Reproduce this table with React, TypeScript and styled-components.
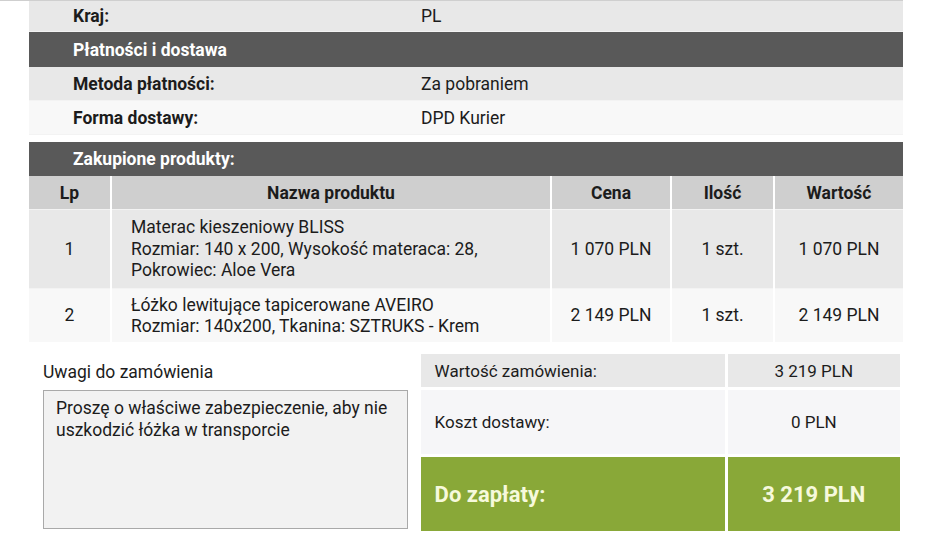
import React from 'react'
import styled, { createGlobalStyle } from 'styled-components'

const GlobalStyle = createGlobalStyle`
    body {
        margin: 0;
        background: #ffffff;
        font-family: Roboto, "Liberation Sans", Arial, sans-serif;
        color: #1c1c1c;
    }
`;

const Page = styled.div`
    width: 874px;
    padding-left: 29px;
    border-top: 1px solid #cfcfcf;
`;

const InfoTable = styled.table`
    width: 100%;
    border-collapse: collapse;
    font-size: 17.5px;
`;

const InfoRow = styled.tr<{ $light?: boolean }>`
    background: ${({ $light }) => ($light ? '#f8f8f8' : '#e8e8e8')};
    border-bottom: 1px solid #f3f3f3;
`;

const InfoLabel = styled.td<{ $h: number }>`
    width: 348px;
    height: ${({ $h }) => $h}px;
    padding: 0 0 0 44px;
    font-weight: 700;
`;

const InfoValue = styled.td`
    padding: 0;
`;

const SectionHeader = styled.td<{ $h: number }>`
    height: ${({ $h }) => $h}px;
    padding: 0 0 0 44px;
    background: #595959;
    color: #ffffff;
    font-weight: 700;
    font-size: 17.5px;
`;

const ProductTable = styled.table`
    width: 100%;
    margin-top: 7px;
    border-collapse: collapse;
    font-size: 17.5px;
`;

const HeadCell = styled.th<{ $w?: number }>`
    width: ${({ $w }) => ($w ? `${$w}px` : 'auto')};
    height: 33px;
    padding: 0;
    background: #cfcfcf;
    font-weight: 700;
    text-align: center;
    border-left: 2px solid #ffffff;
    &:first-child {
        border-left: none;
    }
`;

const ProductRow = styled.tr<{ $light?: boolean }>`
    background: ${({ $light }) => ($light ? '#f8f8f8' : '#e8e8e8')};
    border-top: 1px solid #f3f3f3;
`;

const Cell = styled.td<{ $left?: boolean; $h: number }>`
    height: ${({ $h }) => $h}px;
    padding: ${({ $left }) => ($left ? '1px 0 0 19px' : '1px 0 0')};
    text-align: ${({ $left }) => ($left ? 'left' : 'center')};
    line-height: 21.5px;
    border-left: 2px solid #ffffff;
    &:first-child {
        border-left: none;
    }
`;

const Bottom = styled.div`
    display: flex;
    align-items: flex-start;
    gap: 13px;
    margin-top: 11px;
    padding-left: 14px;
`;

const Notes = styled.div`
    width: 365px;
    padding-top: 8px;
`;

const NotesTitle = styled.div`
    font-size: 17.5px;
    line-height: 22px;
    margin-bottom: 7px;
`;

const NotesBox = styled.div`
    box-sizing: border-box;
    height: 139px;
    padding: 6px 12px;
    background: #f2f2f2;
    border: 1px solid #a9a9a9;
    font-size: 17.5px;
    line-height: 22px;
`;

const SummaryTable = styled.table`
    width: 486px;
    border-collapse: separate;
    border-spacing: 3px;
    margin: -2px 0 0 -3px;
`;

const SumRow = styled.tr<{ $bg: string }>`
    background: ${({ $bg }) => $bg};
`;

const SumLabel = styled.td<{ $h: number; $big?: boolean }>`
    width: 290px;
    height: ${({ $h }) => $h}px;
    padding: 0 0 0 14px;
    font-weight: ${({ $big }) => ($big ? 700 : 400)};
    font-size: ${({ $big }) => ($big ? '22px' : '17px')};
    color: ${({ $big }) => ($big ? '#f6f9dc' : '#1c1c1c')};
`;

const SumValue = styled.td<{ $big?: boolean }>`
    padding: 0;
    text-align: center;
    font-weight: ${({ $big }) => ($big ? 700 : 400)};
    font-size: ${({ $big }) => ($big ? '22px' : '17px')};
    color: ${({ $big }) => ($big ? '#f6f9dc' : '#1c1c1c')};
`;

const info = [
    { label: 'Metoda płatności:', value: 'Za pobraniem' },
    { label: 'Forma dostawy:', value: 'DPD Kurier' },
];

const products = [
    {
        lp: 1,
        lines: ['Materac kieszeniowy BLISS', 'Rozmiar: 140 x 200, Wysokość materaca: 28,', 'Pokrowiec: Aloe Vera'],
        price: '1 070 PLN',
        qty: '1 szt.',
        total: '1 070 PLN',
        height: 77,
    },
    {
        lp: 2,
        lines: ['Łóżko lewitujące tapicerowane AVEIRO', 'Rozmiar: 140x200, Tkanina: SZTRUKS - Krem'],
        price: '2 149 PLN',
        qty: '1 szt.',
        total: '2 149 PLN',
        height: 52,
    },
];

const App = () => {
    return (
        <>
            <GlobalStyle />
            <Page>
                <InfoTable>
                    <tbody>
                        <InfoRow>
                            <InfoLabel $h={30}>Kraj:</InfoLabel>
                            <InfoValue>PL</InfoValue>
                        </InfoRow>
                        <tr>
                            <SectionHeader $h={35} colSpan={2}>Płatności i dostawa</SectionHeader>
                        </tr>
                        {info.map((item, index) => (
                            <InfoRow key={index} $light={index === 1}>
                                <InfoLabel $h={33}>{item.label}</InfoLabel>
                                <InfoValue>{item.value}</InfoValue>
                            </InfoRow>
                        ))}
                    </tbody>
                </InfoTable>

                <ProductTable>
                    <thead>
                        <tr>
                            <SectionHeader $h={34} colSpan={5}>Zakupione produkty:</SectionHeader>
                        </tr>
                        <tr>
                            <HeadCell $w={81}>Lp</HeadCell>
                            <HeadCell>Nazwa produktu</HeadCell>
                            <HeadCell $w={118}>Cena</HeadCell>
                            <HeadCell $w={101}>Ilość</HeadCell>
                            <HeadCell $w={128}>Wartość</HeadCell>
                        </tr>
                    </thead>
                    <tbody>
                        {products.map((product, index) => (
                            <ProductRow key={product.lp} $light={index === 1}>
                                <Cell $h={product.height}>{product.lp}</Cell>
                                <Cell $h={product.height} $left>
                                    {product.lines.map((line, idx) => (
                                        <div key={idx}>{line}</div>
                                    ))}
                                </Cell>
                                <Cell $h={product.height}>{product.price}</Cell>
                                <Cell $h={product.height}>{product.qty}</Cell>
                                <Cell $h={product.height}>{product.total}</Cell>
                            </ProductRow>
                        ))}
                    </tbody>
                </ProductTable>

                <Bottom>
                    <Notes>
                        <NotesTitle>Uwagi do zamówienia</NotesTitle>
                        <NotesBox>Proszę o właściwe zabezpieczenie, aby nie uszkodzić łóżka w transporcie</NotesBox>
                    </Notes>
                    <SummaryTable>
                        <tbody>
                            <SumRow $bg="#e8e8e8">
                                <SumLabel $h={33}>Wartość zamówienia:</SumLabel>
                                <SumValue>3 219 PLN</SumValue>
                            </SumRow>
                            <SumRow $bg="#f6f6f8">
                                <SumLabel $h={64}>Koszt dostawy:</SumLabel>
                                <SumValue>0 PLN</SumValue>
                            </SumRow>
                            <SumRow $bg="#89a838">
                                <SumLabel $h={74} $big>Do zapłaty:</SumLabel>
                                <SumValue $big>3 219 PLN</SumValue>
                            </SumRow>
                        </tbody>
                    </SummaryTable>
                </Bottom>
            </Page>
        </>
    );
}

export default App;
